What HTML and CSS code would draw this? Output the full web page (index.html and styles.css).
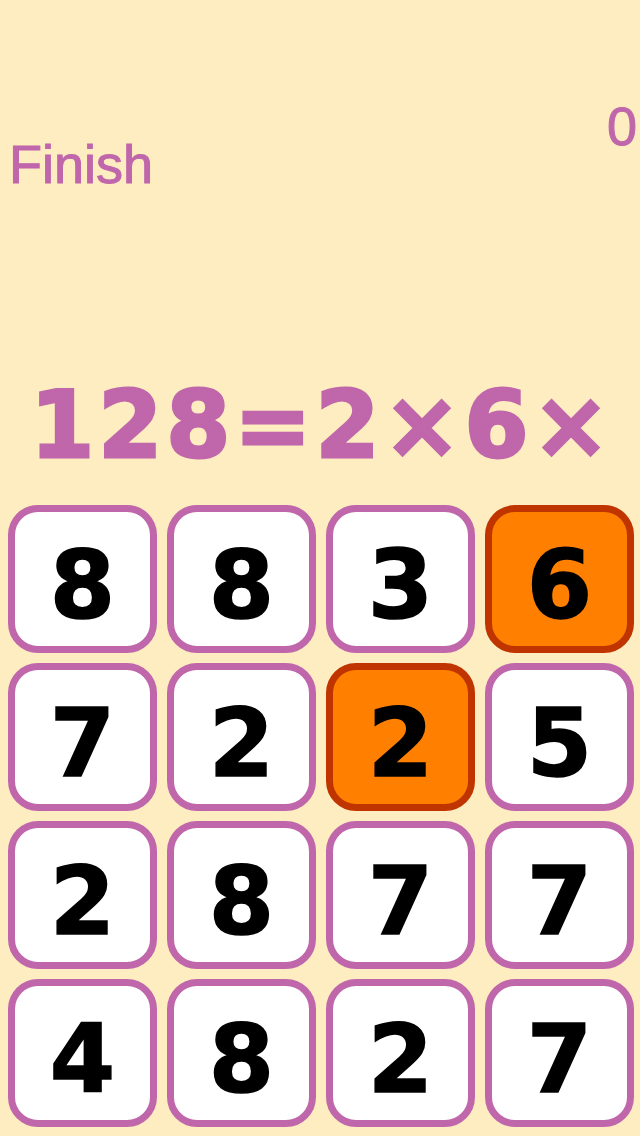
FILE: index.html
```html
<!DOCTYPE html>
<html>
<head>
<meta charset="utf-8">
<link rel="stylesheet" href="styles.css">
</head>
<body>
<div class="screen">
  <div class="header">
    <div class="finish">Finish</div>
    <div class="score">0</div>
  </div>
  <div class="equation">128=2×6×</div>
  <div class="grid">
    <div class="tile">8</div>
    <div class="tile">8</div>
    <div class="tile">3</div>
    <div class="tile selected">6</div>
    <div class="tile">7</div>
    <div class="tile">2</div>
    <div class="tile selected">2</div>
    <div class="tile">5</div>
    <div class="tile">2</div>
    <div class="tile">8</div>
    <div class="tile">7</div>
    <div class="tile">7</div>
    <div class="tile">4</div>
    <div class="tile">8</div>
    <div class="tile">2</div>
    <div class="tile">7</div>
  </div>
</div>
</body>
</html>
```
FILE: styles.css
```css
html, body {
  margin: 0;
  padding: 0;
  background: #feedc0;
}
.screen {
  width: 640px;
  height: 1136px;
  overflow: hidden;
  background: #feedc0;
}
.header {
  height: 370px;
  box-sizing: border-box;
  display: flex;
  justify-content: space-between;
  align-items: flex-start;
  padding: 95px 3px 0 9px;
  font-family: "Liberation Sans", Arial, sans-serif;
  font-size: 54px;
  line-height: 62px;
  color: #c066ab;
  -webkit-text-stroke: 1px #c066ab;
}
.finish {
  margin-top: 38px;
}
.equation {
  font-family: "DejaVu Sans", sans-serif;
  font-weight: bold;
  font-size: 92px;
  line-height: 112px;
  height: 112px;
  letter-spacing: 4px;
  padding-left: 4px;
  text-align: center;
  color: #c066ab;
  -webkit-text-stroke: 3px #c066ab;
}
.grid {
  margin-top: 23px;
  padding-left: 8px;
  display: grid;
  grid-template-columns: repeat(4, 149px);
  grid-auto-rows: 148px;
  column-gap: 10px;
  row-gap: 10px;
}
.tile {
  box-sizing: border-box;
  border: 7px solid #c066ab;
  border-radius: 30px;
  background: #ffffff;
  display: flex;
  align-items: center;
  justify-content: center;
  padding-top: 12px;
  font-family: "DejaVu Sans", sans-serif;
  font-weight: bold;
  font-size: 94px;
  color: #000;
  -webkit-text-stroke: 1.5px #000;
}
.tile.selected {
  background: #ff8000;
  border-color: #c03400;
}
```
